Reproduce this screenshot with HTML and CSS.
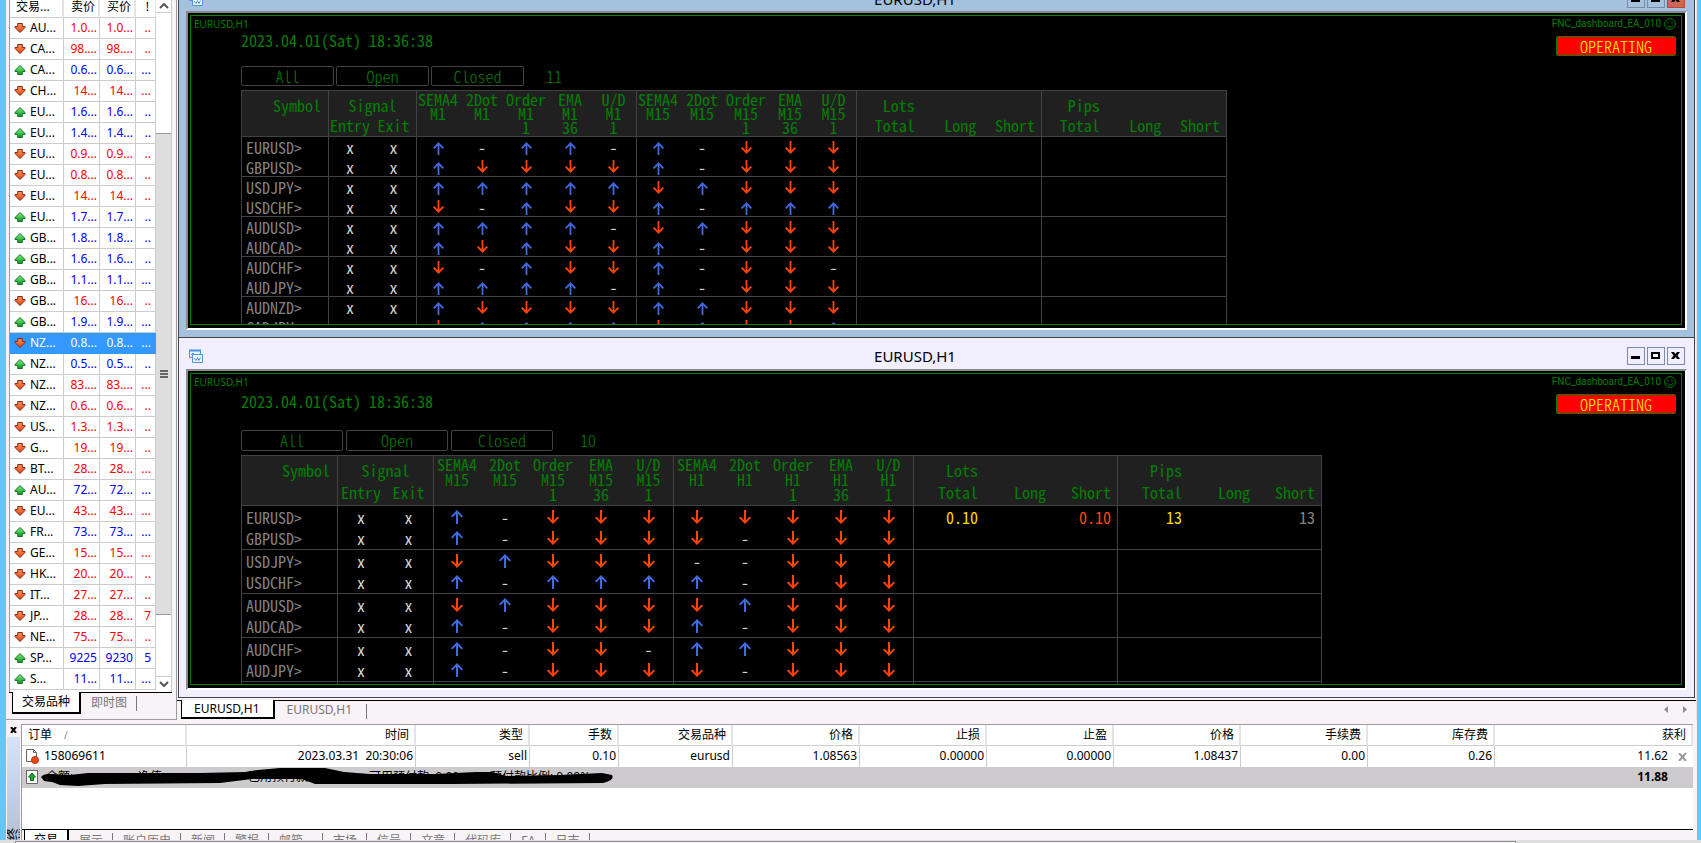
FILE: index.html
```html
<!DOCTYPE html>
<html lang="zh-CN">
<head>
<meta charset="utf-8">
<title>EURUSD,H1</title>
<link rel="stylesheet" href="styles.css">
</head>
<body>
<svg class="sprite" aria-hidden="true">
  <defs>
    <linearGradient id="gUp" x1="0" y1="0" x2="0" y2="1"><stop offset="0" stop-color="#7df08a"/><stop offset="1" stop-color="#0a9a1e"/></linearGradient>
    <linearGradient id="gDown" x1="0" y1="0" x2="0" y2="1"><stop offset="0" stop-color="#ff9a62"/><stop offset="1" stop-color="#e23c0c"/></linearGradient>
    <symbol id="tick-up" viewBox="0 0 12 12"><path d="M6 1.5 11 6.5V7.5H8.3V10.5H3.7V7.5H1V6.5Z" fill="url(#gUp)" stroke="#17701f"/></symbol>
    <symbol id="tick-down" viewBox="0 0 12 12"><path d="M6 10.5 11 5.5V4.5H8.3V1.5H3.7V4.5H1V5.5Z" fill="url(#gDown)" stroke="#84270c"/></symbol>
    <symbol id="arrow-up" viewBox="0 0 12 14"><path d="M6 14V1M.7 6.9 6 1.4 11.3 6.9" fill="none" stroke="#4169e1" stroke-width="2"/></symbol>
    <symbol id="arrow-down" viewBox="0 0 12 14"><path d="M6 0V13M.7 7.100 6 12.600 11.300 7.100" fill="none" stroke="#ff4500" stroke-width="2"/></symbol>
    <symbol id="chart-icon" viewBox="0 0 14 14"><path d="M.5 1.5H11.5V8.5H.5Z" fill="#e6f2ff" stroke="#4d94e6"/><path d="M0 1.5H12" stroke="#4d94e6" stroke-width="2"/><path d="M2 6 4 4 5 6" fill="none" stroke="#4d94e6"/><path d="M3.500 5.500H13.500V13.500H3.500Z" fill="#f4f9ff" stroke="#4d94e6"/><path d="M5 9 7 11.500 8.500 8.500 10 11.500 11.500 8.500" fill="none" stroke="#4d94e6"/></symbol>
    <symbol id="smiley" viewBox="0 0 12 12"><circle cx="6" cy="6" r="5.400" fill="none" stroke="#008000"/><path d="M4 3.500V5.500M8 3.500V5.500M3 7.200C4 9.600 8 9.600 9 7.200" fill="none" stroke="#008000"/></symbol>
    <symbol id="win-min" viewBox="0 0 16 16"><path d="M3 8H12V11H3Z"/></symbol>
    <symbol id="win-max" viewBox="0 0 16 16"><path d="M3 4H12V11H3ZM5 6V9H10V6Z" fill-rule="evenodd"/></symbol>
    <symbol id="win-close" viewBox="0 0 16 16"><path d="M3 4H6L7.500 6 9 4H12L9.500 7.500 12 11H9L7.500 9 6 11H3L5.500 7.500Z"/></symbol>
  </defs>
</svg>

<div class="app">
  <div class="upper">
    <aside class="market">
      <div class="market-body">
        <div class="market-list">
          <table class="quotes">
            <colgroup><col class="q-symbol"><col class="q-bid"><col class="q-ask"><col class="q-spread"></colgroup>
            <thead><tr><th>交易...</th><th>卖价</th><th>买价</th><th>!</th></tr></thead>
            <tbody id="quotes"></tbody>
          </table>
        </div>
        <div class="scrollbar">
          <button class="scroll-btn scroll-btn-up" aria-label="向上"><svg viewBox="0 0 10 6" width="10" height="6"><path d="M1 5 5 1 9 5" fill="none" stroke="#555" stroke-width="2"/></svg></button>
          <div class="scroll-track"><div class="scroll-thumb"><span class="grip"></span></div></div>
          <button class="scroll-btn" aria-label="向下"><svg viewBox="0 0 10 6" width="10" height="6"><path d="M1 1 5 5 9 1" fill="none" stroke="#555" stroke-width="2"/></svg></button>
        </div>
      </div>
      <nav class="tabs market-tabs">
        <a class="tab active" href="#symbols">交易品种</a><a class="tab" href="#ticks">即时图</a>
      </nav>
    </aside>

    <main class="workspace">
      <section class="window window-active">
        <header class="titlebar">
          <svg class="title-icon"><use href="#chart-icon"/></svg>
          <h2 class="title">EURUSD,H1</h2>
          <div class="win-buttons">
            <button aria-label="最小化"><svg><use href="#win-min"/></svg></button>
            <button aria-label="最大化"><svg><use href="#win-max"/></svg></button>
            <button class="close" aria-label="关闭"><svg><use href="#win-close"/></svg></button>
          </div>
        </header>
        <div class="chart"><div class="chart-area">
          <div class="chart-head"><span>EURUSD,H1</span><span class="expert">FNC_dashboard_EA_010<svg><use href="#smiley"/></svg></span></div>
          <button class="operating">OPERATING</button>
          <div class="dash dash-small">
            <p class="clock">2023.04.01(Sat) 18:36:38</p>
            <div class="filters"><button>All</button><button>Open</button><button>Closed</button><span class="count">11</span></div>
            <table class="board" id="board-1"></table>
          </div>
        </div></div>
      </section>

      <section class="window window-lower">
        <header class="titlebar">
          <svg class="title-icon"><use href="#chart-icon"/></svg>
          <h2 class="title">EURUSD,H1</h2>
          <div class="win-buttons">
            <button aria-label="最小化"><svg><use href="#win-min"/></svg></button>
            <button aria-label="最大化"><svg><use href="#win-max"/></svg></button>
            <button aria-label="关闭"><svg><use href="#win-close"/></svg></button>
          </div>
        </header>
        <div class="chart"><div class="chart-area">
          <div class="chart-head"><span>EURUSD,H1</span><span class="expert">FNC_dashboard_EA_010<svg><use href="#smiley"/></svg></span></div>
          <button class="operating">OPERATING</button>
          <div class="dash dash-large">
            <p class="clock">2023.04.01(Sat) 18:36:38</p>
            <div class="filters"><button>All</button><button>Open</button><button>Closed</button><span class="count">10</span></div>
            <table class="board" id="board-2"></table>
          </div>
        </div></div>
      </section>

      <nav class="tabs chart-tabs">
        <a class="tab active" href="#chart1">EURUSD,H1</a><a class="tab" href="#chart2">EURUSD,H1</a>
        <span class="tab-scroll"><svg viewBox="0 0 24 8" width="24" height="8"><path d="M4 0V7L0 3.500ZM19 0V7L23 3.500Z" fill="#8c8c8c"/></svg></span>
      </nav>
    </main>
  </div>

  <section class="terminal">
    <div class="terminal-side">
      <button class="side-close" aria-label="关闭"><svg viewBox="0 0 7 6" width="7" height="6"><path d="M1 0 6 6M6 0 1 6" stroke="#000" stroke-width="2"/></svg></button>
      <div class="side-title"><span>终端</span></div>
    </div>
    <div class="terminal-main">
      <table class="orders">
        <colgroup><col class="o-id"><col class="o-time"><col class="o-type"><col class="o-lots"><col class="o-type"><col class="o-price"><col class="o-price"><col class="o-price"><col class="o-price"><col class="o-price"><col class="o-price"><col></colgroup>
        <thead><tr><th>订单<span class="sort">/</span></th><th>时间</th><th>类型</th><th>手数</th><th>交易品种</th><th>价格</th><th>止损</th><th>止盈</th><th>价格</th><th>手续费</th><th>库存费</th><th>获利</th></tr></thead>
        <tbody>
          <tr><td><span class="order-id"><svg viewBox="0 0 14 16" width="14" height="16"><path d="M1.500 1.500H8.500L11.500 4.500V13.500H1.500Z" fill="#fff" stroke="#666"/><path d="M8.500 1.500V4.500H11.500" fill="none" stroke="#666"/><circle cx="10" cy="12" r="3.500" fill="#ee4a16" stroke="#b5300a"/></svg>158069611</span></td><td>2023.03.31&nbsp; 20:30:06</td><td>sell</td><td>0.10</td><td>eurusd</td><td>1.08563</td><td>0.00000</td><td>0.00000</td><td>1.08437</td><td>0.00</td><td>0.26</td><td>11.62<button class="row-close" aria-label="平仓"><svg viewBox="0 0 9 8" width="9" height="8"><path d="M1 0 8 8M8 0 1 8" stroke="#999" stroke-width="2"/></svg></button></td></tr>
          <tr class="summary"><td colspan="11"><div class="balance">
            <svg class="balance-icon" viewBox="0 0 12 14"><path d="M.5.5H11.500V13.500H.5Z" fill="#fff" stroke="#666"/><path d="M6 3 9.500 7H7.500V10.500H4.500V7H2.500Z" fill="#18b02c" stroke="#0b6e18"/></svg>
            <span>余额:</span><span>净值:</span><span>已用预付款:</span><span>可用预付款: 0.00</span><span>预付款比例: 0.00%</span>
            <svg class="scribble" viewBox="0 0 575 20"><path d="M1 9Q3 6 9 6L30 7 48 5 160 5 205 4 218 2 240 0 285 0 304 4 330 6 395 6 436 4 452 4 466 8 520 7 562 5 572 7Q575 12 563 15L412 16 275 16 262 11 212 11 180 15 65 16 38 18 20 17 12 14 4 13Z"/></svg>
          </div></td><td>11.88</td></tr>
        </tbody>
      </table>
      <div class="orders-space"></div>
      <nav class="tabs terminal-tabs">
        <a class="tab active" href="#t1">交易</a><a class="tab" href="#t2">展示</a><a class="tab" href="#t3">账户历史</a><a class="tab" href="#t4">新闻</a><a class="tab" href="#t5">警报</a><a class="tab tab-mail" href="#t6">邮箱</a><a class="tab" href="#t7">市场</a><a class="tab" href="#t8">信号</a><a class="tab" href="#t9">文章</a><a class="tab" href="#t10">代码库</a><a class="tab" href="#t11">EA</a><a class="tab" href="#t12">日志</a>
      </nav>
    </div>
  </section>
</div>
<footer class="status"><div class="status-left"></div></footer>
<script src="app.js"></script>
</body>
</html>
```

FILE: styles.css
```css
* { box-sizing: border-box; }

body {
  margin: 0;
  height: 100vh;
  overflow: hidden;
  display: flex;
  flex-direction: column;
  background: #f7f3f7;
  font: 12px/20px "Noto Sans", "Noto Sans CJK SC", sans-serif;
  color: #000;
}

button { font: inherit; padding: 0; border: 0; background: none; color: inherit; }
a { color: inherit; text-decoration: none; }
table { border-spacing: 0; table-layout: fixed; }
th, td { padding: 0; font-weight: normal; white-space: nowrap; overflow: hidden; }
h2, p { margin: 0; font-weight: normal; }
svg { display: block; }
.sprite { position: absolute; width: 0; height: 0; }

.app {
  flex: 1;
  min-height: 0;
  display: flex;
  flex-direction: column;
  border-left: 6px solid #63c9f0;
  border-right: 4px solid #63c9f0;
  overflow: hidden;
}
.upper { flex: 1; min-height: 0; display: flex; }

/* market watch */
.market {
  width: 171px;
  padding: 0 4px 0 3px;
  display: flex;
  flex-direction: column;
  border-right: 1px solid #9c9a9c;
  border-bottom: 1px solid #9c9a9c;
}
.market-body {
  flex: 1;
  min-height: 0;
  display: flex;
  border-left: 1px solid #9c9a9c;
  background: #fff;
}
.market-list { flex: 1; overflow: hidden; }
.quotes { width: 100%; }
.q-symbol { width: 54px; }
.q-bid, .q-ask { width: 36px; }
.quotes th {
  height: 18px;
  line-height: 14px;
  padding-bottom: 3px;
  border-right: 2px solid #e6e2e6;
  border-bottom: 1px solid #cecbce;
  text-align: right;
}
.quotes th:nth-child(2), .quotes th:nth-child(3) { padding-right: 3px; }
.quotes th:first-child { text-align: left; padding-left: 6px; }
.quotes th:last-child { padding-right: 6px; border-right-width: 1px; }
.quotes td {
  height: 21px;
  text-align: right;
  padding-right: 2px;
  border-right: 1px solid #cecbce;
  border-bottom: 1px solid #cecbce;
}
.quotes td:last-child { padding-right: 4px; }
.quotes td:first-child { padding-left: 4px; }
.pair { display: flex; align-items: center; gap: 4px; }
.pair svg { width: 12px; height: 12px; }
.down td { color: #f00; }
.up td { color: #00f; }
.quotes td:first-child { color: #000; }
.quotes .selected td, .quotes .selected td:first-child { background: #3399ff; border-color: #3399ff; color: #fff; }

.scrollbar { width: 16px; display: flex; flex-direction: column; border-right: 1px solid #cecbce; }
.scroll-btn { height: 16px; display: grid; place-items: center; border-top: 1px solid #cecbce; }
.scroll-btn-up { height: 13px; border-top: 0; border-bottom: 1px solid #cecbce; }
.scroll-track { flex: 1; display: flex; flex-direction: column; padding: 120px 0 61px; }
.scroll-thumb { flex: 1; display: grid; place-items: center; background: #dedede; border: solid #9c9a9c; border-width: 1px 0; }
.grip { width: 8px; height: 8px; background: repeating-linear-gradient(#666 0 2px, transparent 2px 3px); }

/* tabs */
.tabs { display: flex; border-top: 1px solid #000; color: #777; }
.tab { position: relative; }
.tab.active { background: #fff; color: #000; border: solid #000; border-width: 0 2px 2px 1px; margin-top: -1px; }
.tab:not(.active)::after {
  content: "";
  position: absolute;
  right: 0;
  top: 3px;
  width: 1px;
  height: 15px;
  background: #777;
}
.market-tabs { height: 27px; }
.market-tabs .tab { height: 22px; line-height: 19px; padding: 0 10px; }
.market-tabs .tab.active { margin-left: 3px; padding: 0 9px; }

/* chart windows */
.workspace { flex: 1; min-width: 0; display: flex; flex-direction: column; overflow: hidden; border-right: 1px solid #e7e3e7; }
.window {
  display: flex;
  flex-direction: column;
  min-height: 0;
  margin: 0 1px;
  padding: 0 7px 7px;
  border: 1px solid #424542;
  border-top: 0;
  background: #f0eeff;
}
.window-active { flex: 337; background: #a4c1de; }
.window-lower { flex: 360; }
.titlebar {
  flex: none;
  height: 31px;
  padding: 6px 0 0 3px;
  display: grid;
  grid-template-columns: 18px 1fr 64px;
  align-items: center;
}
.window-active .titlebar { margin-top: -20px; }
.title-icon { width: 14px; height: 14px; }
.title { font-size: 15px; line-height: 20px; text-align: center; }
.win-buttons { display: flex; justify-content: flex-end; gap: 2px; padding-right: 2px; }
.win-buttons button { width: 18px; height: 18px; border: 1px solid #7b8aa5; }
.win-buttons svg { width: 16px; height: 16px; }
.win-buttons .close { background: #cc6655; border-color: #b5493c; }
.chart {
  flex: 1;
  min-height: 0;
  display: flex;
  padding: 2px 3px 3px 2px;
  background: #000;
  border: 2px solid #fff;
  border-top-color: #8c8a8c;
  border-left-color: #8c8a8c;
}
.chart-area {
  flex: 1;
  min-width: 0;
  position: relative;
  overflow: hidden;
  border: 1px solid #008000;
  color: #008000;
}
.chart-head { display: flex; justify-content: space-between; padding: 0 5px 0 3px; font-size: 10px; line-height: 16px; }
.expert { display: flex; align-items: center; gap: 3px; font-family: Roboto, sans-serif; }
.expert svg { width: 12px; height: 12px; }

.operating, .dash { font: 300 16px/16px "Noto Sans CJK JP", monospace; font-feature-settings: "hwid"; }
.operating {
  position: absolute;
  top: 20px;
  right: 5px;
  width: 120px;
  height: 20px;
  background: #f00;
  border: 1px solid #008000;
  border-radius: 2px;
  color: #ff0;
}

.dash-small { --cell: 44px; --symbol: 87px; --sum: 185px; --btn: 93px; --row: 20px; --th1: 27px; --th2: 19px; --lh: 14px; }
.dash-large { --cell: 48px; --symbol: 96px; --sum: 204px; --btn: 102px; --row: 22px; --th1: 29px; --th2: 21px; --lh: 15px; }
.dash { padding-left: 50px; }
.clock { line-height: 16px; white-space: nowrap; }
.filters { display: flex; gap: 2px; align-items: center; }
.dash-small .filters { margin: 18px 0 4px; }
.dash-large .clock { line-height: 22px; }
.dash-large .filters { gap: 3px; margin: 18px 0 4px; }
.filters button {
  width: var(--btn);
  height: var(--row);
  border: 1px solid #424242;
  border-radius: 2px;
}
.dash-large .filters button { height: 21px; }
.count { padding-left: 20px; }
.dash-large .count { padding-left: 24px; }

.board {
  width: calc(var(--symbol) + var(--cell) * 12 + var(--sum) * 2 + 1px);
  border-top: 1px solid #424242;
  border-left: 1px solid #424242;
}
.c-symbol { width: var(--symbol); }
.c-cell { width: var(--cell); }
.c-sum { width: calc(var(--sum) / 3); }
.board th { background: #202020; overflow: visible; vertical-align: top; }
.board .edge { border-right: 1px solid #424242; }
.board .r1 { height: var(--th1); padding-top: 4px; line-height: 20px; }
.board .r2 { height: var(--th2); line-height: 14px; padding-right: 2px; border-bottom: 1px solid #424242; }
.board .full { border-bottom: 1px solid #424242; }
.board th.symbol { text-align: right; padding: 4px 7px 0 0; line-height: 20px; }
.board th.indicator { padding: 1px 2px 0 0; line-height: var(--lh); }
.board th.indicator span { display: flex; justify-content: center; }
.board td { height: var(--row); padding-right: 2px; text-align: center; color: #d3d3d3; line-height: 16px; overflow: visible; }
.board tbody tr:nth-child(even) td { border-bottom: 1px solid #424242; }
.board td.name { text-align: left; padding-left: 4px; color: #808080; }
.board th.num, .board td.num { text-align: right; padding-right: 4px; }
.board th.num.edge, .board td.num.edge { padding-right: 6px; }
.board td svg { width: 12px; height: 14px; margin: 0 auto; }
.dash-small .board td svg { width: 11px; height: 13px; }
.dash-small .board td .rise { margin-top: 3px; }
.board td.gold { color: #ffd700; }
.board td.orange { color: #ff4500; }
.board td.grey { color: #808080; }

.chart-tabs { height: 20px; margin-top: 2px; }
.chart-tabs .tab { height: 19px; line-height: 18px; padding: 0 15px 0 12px; }
.chart-tabs .tab.active { margin-left: 4px; padding: 0 13px 0 12px; }
.tab-scroll { margin-left: auto; padding: 5px 8px 0 0; }

/* terminal */
.terminal { display: flex; margin-top: 4px; overflow: hidden; }
.terminal-side { width: 15px; display: flex; flex-direction: column; }
.side-close { height: 13px; display: grid; place-items: center; }
.side-title {
  flex: 1;
  height: 0;
  margin: 0 1px;
  display: flex;
  align-items: flex-start;
  padding-top: 91px;
  overflow: hidden;
  background: linear-gradient(#d6e3fb, #b5c0d4);
  line-height: 12px;
}
.side-title span { writing-mode: vertical-rl; text-orientation: sideways; transform: rotate(180deg); }
.terminal-main {
  flex: 1;
  min-width: 0;
  margin-right: 4px;
  border-top: 1px solid #9c9a9c;
  border-left: 1px solid #9c9a9c;
  background: #fff;
}
.orders { width: 100%; }
.o-id { width: 165px; }
.o-time { width: 229px; }
.o-type { width: 114px; }
.o-lots { width: 89px; }
.o-price { width: 127px; }
.orders th {
  height: 21px;
  line-height: 20px;
  text-align: right;
  padding-right: 5px;
  border-right: 2px solid #e6e2e6;
  border-bottom: 1px solid #cecbce;
}
.orders th:first-child { text-align: left; padding-left: 6px; }
.sort { margin-left: 12px; color: #888; font-size: 10px; }
.orders td { height: 21px; text-align: right; padding-right: 2px; border-right: 1px solid #cecbce; }
.order-id { display: flex; align-items: center; gap: 5px; padding-left: 3px; }
.orders td:last-child { padding-right: 25px; border-right: 0; position: relative; }
.row-close { position: absolute; right: 6px; top: 7px; }
.orders .summary td { background: #cecbce; border: 0; overflow: visible; }
.orders .summary td:last-child { font-weight: bold; }
.balance { position: relative; display: flex; padding-left: 24px; }
.balance-icon { position: absolute; left: 4px; top: 3px; width: 12px; height: 14px; }
.balance span { width: 92px; text-align: left; }
.balance span:nth-of-type(2) { width: 110px; }
.balance span:nth-of-type(3), .balance span:nth-of-type(4) { width: 121px; }
.scribble { position: absolute; left: 18px; top: 1px; width: 575px; height: 20px; }
.orders-space { height: 41px; }
.terminal-tabs { height: 11px; background: #f7f3f7; overflow: hidden; border-top: 1px solid #000; }
.terminal-tabs .tab { height: 22px; line-height: 21px; padding: 0 10px; }
.terminal-tabs .tab.active { border-bottom: 0; margin-left: 2px; padding: 0 9px; }
.terminal-tabs .tab-mail { padding-right: 20px; }

.status { flex: none; height: 3px; padding-left: 15px; background: #dedede; }
.status-left { width: 89%; height: 3px; border: solid #8c8e8c; border-width: 1px 1px 0; margin-top: 1px; background: #f5f3f5; }
```

FILE: app.js
```js
const quotes = `d AU... 1.0... 1.0... ..
d CA... 98.... 98.... ..
u CA... 0.6... 0.6... ...
d CH... 14... 14... ...
u EU... 1.6... 1.6... ..
u EU... 1.4... 1.4... ..
d EU... 0.9... 0.9... ..
d EU... 0.8... 0.8... ..
d EU... 14... 14... ..
u EU... 1.7... 1.7... ..
u GB... 1.8... 1.8... ..
u GB... 1.6... 1.6... ..
u GB... 1.1... 1.1... ...
d GB... 16... 16... ..
u GB... 1.9... 1.9... ...
d NZ... 0.8... 0.8... ... selected
u NZ... 0.5... 0.5... ..
d NZ... 83.... 83.... ...
d NZ... 0.6... 0.6... ..
d US... 1.3... 1.3... ..
d G... 19... 19... ..
d BT... 28... 28... ...
u AU... 72... 72... ...
d EU... 43... 43... ...
u FR... 73... 73... ...
d GE... 15... 15... ...
d HK... 20... 20... ..
d IT... 27... 27... ..
d JP... 28... 28... 7
d NE... 75... 75... ..
u SP... 9225 9230 5
u S... 11... 11... ...`;

document.getElementById("quotes").innerHTML = quotes.split("\n").map(line => {
  const [dir, name, bid, ask, spread, selected = ""] = line.split(" ");
  const kind = dir === "u" ? "up" : "down";
  return `<tr class="${kind} ${selected}"><td><span class="pair"><svg><use href="#tick-${kind}"/></svg>${name}</span></td><td>${bid}</td><td>${ask}</td><td>${spread}</td></tr>`;
}).join("");

const marks = {
  U: '<svg class="rise"><use href="#arrow-up"/></svg>',
  D: '<svg><use href="#arrow-down"/></svg>',
  "-": "-"
};

function board(id, frames, rows, sums = {}) {
  const indicators = frames.flatMap(frame =>
    [["SEMA4", ""], ["2Dot", ""], ["Order", "1"], ["EMA", "36"], ["U/D", "1"]].map(([name, period], i) =>
      `<th rowspan="2" class="indicator full ${i === 4 ? "edge" : ""}"><span>${name}</span><span>${frame}</span><span>${period}</span></th>`)).join("");
  const group = name => `<th class="r1 num">${name}</th><th class="r1 edge" colspan="2"></th>`;
  const parts = '<th class="r2 num">Total</th><th class="r2 num">Long</th><th class="r2 num edge">Short</th>';
  const body = rows.map(row => {
    const [name, cells] = row.split(" ");
    const icons = [...cells].map((c, i) => `<td class="${i % 5 === 4 ? "edge" : ""}">${marks[c]}</td>`).join("");
    const values = (sums[name] || Array(6).fill(["", ""])).map(([text, tone], i) =>
      `<td class="num ${tone} ${i % 3 === 2 ? "edge" : ""}">${text}</td>`).join("");
    return `<tr><td class="name edge">${name}&gt;</td><td>x</td><td class="edge">x</td>${icons}${values}</tr>`;
  }).join("");
  document.getElementById(id).innerHTML =
    `<colgroup><col class="c-symbol">${'<col class="c-cell">'.repeat(12)}${'<col class="c-sum">'.repeat(6)}</colgroup>
    <thead><tr><th rowspan="2" class="symbol full edge">Symbol</th><th colspan="2" class="r1 edge">Signal</th>${indicators}${group("Lots")}${group("Pips")}</tr>
    <tr><th class="r2">Entry</th><th class="r2 edge">Exit</th>${parts}${parts}</tr></thead><tbody>${body}</tbody>`;
}

board("board-1", ["M1", "M15"], [
  "EURUSD U-UU-U-DDD", "GBPUSD UDDDDU-DDD", "USDJPY UUUUUDUDDD", "USDCHF D-UDDU-UUU",
  "AUDUSD UUUU-DUDDD", "AUDCAD UDUDDU-DDD", "AUDCHF D-UDDU-DD-", "AUDJPY UUUU-U-DDD",
  "AUDNZD UDDDDUUDDD", "CADJPY DUUUUDUDDU"
]);
board("board-2", ["M15", "H1"], [
  "EURUSD U-DDDDDDDD", "GBPUSD U-DDDD-DDD", "USDJPY DUDDD--DDD", "USDCHF U-UUUU-DDD",
  "AUDUSD DUDDDDUDDD", "AUDCAD U-DDDU-DDD", "AUDCHF U-DD-UUDDD", "AUDJPY U-DDDD-DDD", "AUDNZD U-DDDD-DDD"
], { EURUSD: [["0.10", "gold"], ["", ""], ["0.10", "orange"], ["13", "gold"], ["", ""], ["13", "grey"]] });
```
